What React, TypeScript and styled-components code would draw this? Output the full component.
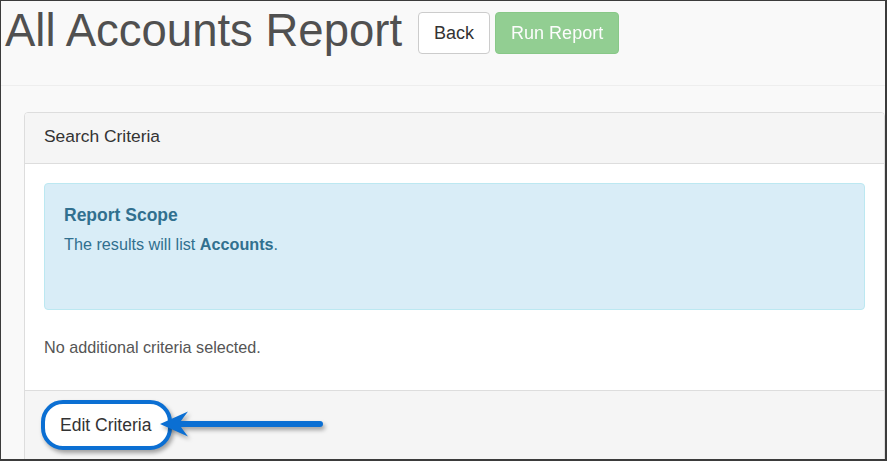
import styled, { createGlobalStyle } from "styled-components";

const GlobalStyle = createGlobalStyle`
  html, body {
    margin: 0;
    padding: 0;
    background: #ffffff;
  }
  * {
    box-sizing: border-box;
  }
`;

const CalloutArrow = () => (
  <ArrowSvg width="180" height="40" viewBox="0 0 180 40">
    <line x1="28" y1="19" x2="169" y2="19" stroke="#0b6fd3" strokeWidth="6" strokeLinecap="round" />
    <path d="M9 19 L37 6.5 Q32 13 30 16 L30 22 Q32 25 37 31.5 Z" fill="#0b6fd3" />
  </ArrowSvg>
);

const App = () => {
  return (
    <>
      <GlobalStyle />
      <Frame>
        <PageHeader>
          <Title>All Accounts Report</Title>
          <Button>Back</Button>
          <Button variant="success" disabled>
            Run Report
          </Button>
        </PageHeader>
        <Main>
          <Panel>
            <PanelHeading>Search Criteria</PanelHeading>
            <PanelBody>
              <Alert>
                <AlertTitle>Report Scope</AlertTitle>
                <AlertText>
                  The results will list <strong>Accounts</strong>.
                </AlertText>
              </Alert>
              <Note>No additional criteria selected.</Note>
            </PanelBody>
            <PanelFooter>
              <Callout>Edit Criteria</Callout>
            </PanelFooter>
          </Panel>
        </Main>
        <CalloutArrow />
      </Frame>
    </>
  );
};

const Frame = styled.div`
  position: relative;
  width: 887px;
  height: 461px;
  overflow: hidden;
  border-style: solid;
  border-color: #3b3b3b;
  border-width: 1px 2px 2px 1px;
  background: #f9f9f9;
  font-family: "Liberation Sans", Arial, Helvetica, sans-serif;
  color: #333333;
`;

const PageHeader = styled.div`
  display: flex;
  align-items: flex-start;
  height: 85px;
  padding: 11px 0 0 4px;
  border-bottom: 1px solid #eeeeee;
`;

const Title = styled.h1`
  margin: -6px 16px 0 0;
  font-size: 45.5px;
  font-weight: normal;
  line-height: 1.1;
  color: #505050;
  white-space: nowrap;
`;

const Button = styled.button<{ variant?: "success" }>`
  height: 42px;
  padding: 0 15px;
  margin-right: 5px;
  font-family: inherit;
  font-size: 18px;
  border-radius: 4px;
  border: 1px solid ${(p) => (p.variant === "success" ? "#4cae4c" : "#cccccc")};
  background: ${(p) => (p.variant === "success" ? "#5cb85c" : "#ffffff")};
  color: ${(p) => (p.variant === "success" ? "#ffffff" : "#333333")};
  opacity: ${(p) => (p.variant === "success" ? 0.65 : 1)};
  cursor: pointer;

  &:disabled {
    cursor: not-allowed;
  }
`;

const Main = styled.div`
  padding: 26px 0 0 23px;
`;

const Panel = styled.div`
  background: #ffffff;
  border: 1px solid #dddddd;
  border-radius: 4px;
  overflow: hidden;
`;

const PanelHeading = styled.div`
  padding: 13px 19px 17px;
  font-size: 17.4px;
  line-height: 20px;
  color: #333333;
  background: #f5f5f5;
  border-bottom: 1px solid #dddddd;
`;

const PanelBody = styled.div`
  padding: 19px 19px 34px 19px;
`;

const Alert = styled.div`
  padding: 21px 19px 56px;
  background: #d9edf7;
  border: 1px solid #bce8f1;
  border-radius: 4px;
  color: #31708f;
`;

const AlertTitle = styled.h4`
  margin: 0 0 10px;
  font-size: 17.5px;
  line-height: 20px;
  font-weight: bold;
`;

const AlertText = styled.p`
  margin: 0;
  font-size: 16.2px;
  line-height: 18px;
`;

const Note = styled.p`
  margin: 28px 0 0;
  font-size: 16.2px;
  line-height: 18px;
  color: #555555;
`;

const PanelFooter = styled.div`
  height: 80px;
  padding: 9px 16px;
  background: #f5f5f5;
  border-top: 1px solid #dddddd;
`;

const Callout = styled.div`
  display: inline-block;
  height: 50px;
  padding: 0 17px 0 15px;
  font-size: 17.5px;
  line-height: 42px;
  color: #333333;
  background: #ffffff;
  border: 4px solid #0b6fd3;
  border-radius: 22px;
  box-shadow: 2px 3px 4px rgba(0, 0, 0, 0.35);
`;

const ArrowSvg = styled.svg`
  position: absolute;
  left: 150px;
  top: 404px;
  filter: drop-shadow(2px 3px 2px rgba(0, 0, 0, 0.35));
`;

export default App;
